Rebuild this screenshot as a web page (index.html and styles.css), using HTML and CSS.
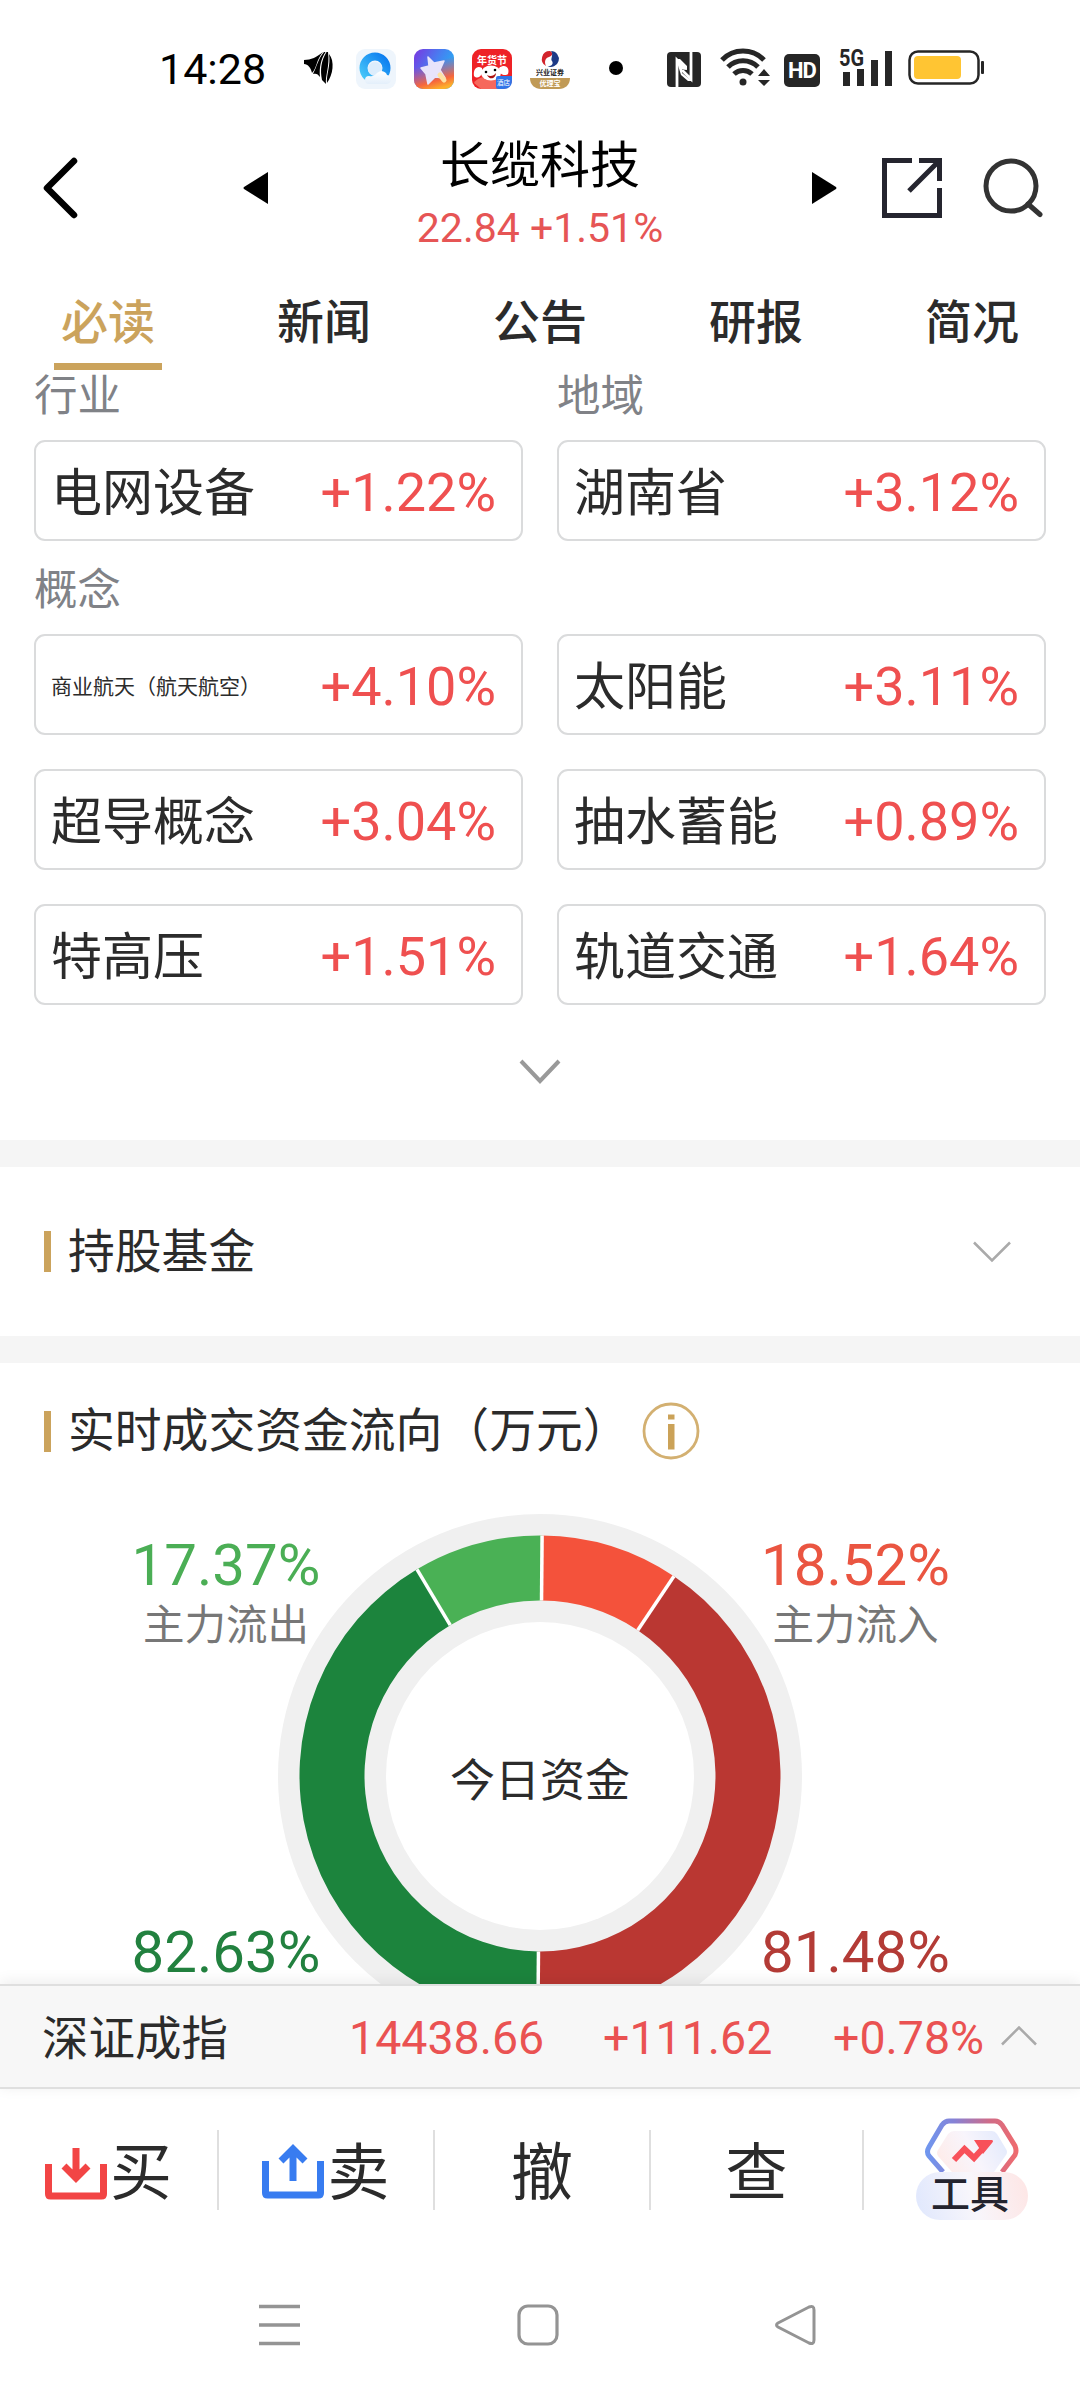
FILE: index.html
```html
<!DOCTYPE html>
<html lang="zh-CN">
<head>
    <meta charset="UTF-8">
    <meta name="viewport" content="width=device-width, initial-scale=1.0">
    <title>长缆科技</title>
    <link rel="stylesheet" href="styles.css">
</head>
<body>
    <div class="status-bar">
        <span class="time">14:28</span>
        <svg class="app-leaf" width="32" height="36" viewBox="0 0 32 36">
            <path d="M1 9C8 9 14 6 20 1C13 9 14 17 9 22C8 17 5 13 1 13Z"/>
            <path d="M21 1C15 8 14 15 10 23C13 22 15 23 17 26C16 17 18 8 22.500 1Z"/>
            <path d="M23.500 1C18 10 17 19 19 29L23 33C22 25 27 15 25 1Z"/>
            <path d="M26 3C28 14 23 24 24 32C30 24 32 10 26 3Z"/>
        </svg>
        <svg class="app" width="40" height="40" viewBox="0 0 40 40">
            <defs>
                <linearGradient id="qb" x1="0" y1="1" x2="1" y2="0"><stop offset="0" stop-color="#48c9f9"/><stop offset="1" stop-color="#0a7bf0"/></linearGradient>
                <linearGradient id="cloud" x1="0" y1="0" x2="0" y2="1"><stop offset="0" stop-color="#fff"/><stop offset="1" stop-color="#e3effb"/></linearGradient>
            </defs>
            <rect width="40" height="40" rx="9" fill="#eef5fc"/>
            <circle cx="19" cy="19" r="11.5" fill="none" stroke="url(#qb)" stroke-width="8"/>
            <circle cx="19" cy="20" r="7" fill="#dcedfc"/>
            <path d="M13 35a4 4 0 0 1 0-8c4 1 6-1 8-3a6 6 0 0 1 10 2a4.500 4.500 0 0 1-1 9z" fill="url(#cloud)"/>
        </svg>
        <svg class="app" width="40" height="40" viewBox="0 0 40 40">
            <defs>
                <linearGradient id="sky" x1="0" y1="0" x2="1" y2="0.6"><stop offset="0" stop-color="#7a35e0"/><stop offset="0.5" stop-color="#4a7bf0"/><stop offset="1" stop-color="#20b8f5"/></linearGradient>
                <linearGradient id="warm" x1="0.3" y1="0" x2="0.6" y2="1"><stop offset="0.35" stop-color="#f0406a" stop-opacity="0"/><stop offset="0.8" stop-color="#f7663c"/><stop offset="1" stop-color="#fcb02c"/></linearGradient>
            </defs>
            <rect width="40" height="40" rx="9" fill="url(#sky)"/>
            <rect width="40" height="40" rx="9" fill="url(#warm)"/>
            <path d="M14 8l6 6 10-2-4 9 5 8-10-1-7 7-2-10-5-6 8-2z" fill="#e8e4fb" stroke="#e8e4fb" stroke-width="1.500" stroke-linejoin="round"/>
            <path d="M26 26l4 5" stroke="#fde3a4" stroke-width="5" stroke-linecap="round"/>
        </svg>
        <svg class="app" width="40" height="40" viewBox="0 0 40 40">
            <rect width="40" height="40" rx="9" fill="#ee2226"/>
            <path d="M2 34c5-9 30-10 34 2l-5 4H9z" fill="#f6685c"/>
            <path d="M10 19C5 16 1 20 2 27c3 3 6 1 8-2zM27 19c7-5 11 1 9 6c-2 2-6 1-8-1z" fill="#fff"/>
            <ellipse cx="19" cy="24" rx="10" ry="7.500" fill="#fff"/>
            <circle cx="14" cy="23" r="1.300"/>
            <circle cx="23" cy="21" r="1.300"/>
            <path d="M15 26c3 2 7 1 9-2c0 5-6 8-9 2z" fill="#a11"/>
            <text x="20" y="14.500" text-anchor="middle" class="jd-title">年货节</text>
            <path d="M24 29q0-2 2-2h14v4q0 9-9 9h-5q-2 0-2-2z" fill="#2f74e8"/>
            <text x="31.500" y="36" text-anchor="middle" class="jd-tag">酒店</text>
        </svg>
        <svg class="app" width="40" height="40" viewBox="0 0 40 40">
            <path d="M20 2a8 8 0 0 0-4 15c-2-4-1-8 3-9c3-1 5-4 1-6z" fill="#d2242c"/>
            <path d="M21 2a8 8 0 1 1-4 15c4 1 7-2 5-5c-2-2 2-6-1-10z" fill="#1d3a86"/>
            <text x="20" y="26" text-anchor="middle" class="xy-name">兴业证券</text>
            <path d="M0 29h40c0 7-5 11-11 11H11C5 40 0 36 0 29z" fill="#c09a56"/>
            <text x="20" y="37" text-anchor="middle" class="xy-tag">优理宝</text>
        </svg>
        <i class="dot"></i>
        <svg class="nfc" width="34" height="35" viewBox="0 0 34 35">
            <rect width="34" height="35" rx="4" fill="#262626"/>
            <path d="M10 35V8L19 17M24 0V27L15 18" fill="none" stroke="#fff" stroke-width="2.800"/>
            <path d="M9 7L13 7L20 14V18L15 17V21L25 29H21L14 23" fill="#fff"/>
        </svg>
        <svg class="wifi" width="50" height="38" viewBox="0 0 50 38">
            <g fill="none" stroke="#262626" stroke-width="5">
                <path d="M2 12a29 29 0 0 1 42 0"/>
                <path d="M8 19a21 21 0 0 1 30 0"/>
                <path d="M14 26a13 13 0 0 1 18 0"/>
            </g>
            <circle cx="23" cy="34" r="3.500" fill="#262626"/>
            <path d="M38 28l6-7 6 7zM38 32h12l-6 6z" fill="#262626"/>
        </svg>
        <span class="hd">HD</span>
        <svg class="signal" width="54" height="48" viewBox="0 -10 54 48">
            <text x="0" y="17" textLength="25" lengthAdjust="spacingAndGlyphs">5G</text>
            <path d="M4 23h7v14H4zM18 20h7v17h-7zM32 11h7v26h-7zM46 2h7v35h-7z" fill="#262626"/>
        </svg>
        <svg class="battery" width="78" height="36" viewBox="0 0 78 36">
            <rect x="1.500" y="1.500" width="69" height="32" rx="8.500" fill="#fff" stroke="#262626" stroke-width="2.500"/>
            <rect x="6" y="6" width="47" height="23" rx="4" fill="#ffc533"/>
            <rect x="73" y="11" width="3" height="13" rx="1" fill="#262626"/>
        </svg>
    </div>

    <div class="header">
        <svg class="back" width="36" height="62" viewBox="0 0 36 62">
            <path d="M31 4L4 31l27 27" fill="none" stroke="#000" stroke-width="6.500" stroke-linecap="round" stroke-linejoin="round"/>
        </svg>
        <svg class="prev" width="26" height="34" viewBox="0 0 26 34"><path d="M25 1v32L1 18q-1-1 0-2z"/></svg>
        <div class="stock">
            <div class="stock-name">长缆科技</div>
            <div class="stock-price">22.84 +1.51%</div>
        </div>
        <svg class="next" width="26" height="34" viewBox="0 0 26 34"><path d="M1 1v32L25 18q1-1 0-2z"/></svg>
        <svg class="share" width="60" height="60" viewBox="0 0 60 60">
            <path d="M30 2.500H2.500v55h55V30M37 2.500h20.500V23M57 3L27 33" fill="none" stroke="#25252f" stroke-width="5"/>
        </svg>
        <svg class="search" width="60" height="60" viewBox="0 0 60 60">
            <circle cx="28" cy="28" r="25" fill="none" stroke="#333" stroke-width="5"/>
            <path d="M45 46l12 10.500" stroke="#333" stroke-width="5" stroke-linecap="round"/>
        </svg>
    </div>

    <div class="tabs">
        <div class="tab active">必读</div>
        <div class="tab">新闻</div>
        <div class="tab">公告</div>
        <div class="tab">研报</div>
        <div class="tab">简况</div>
    </div>

    <div class="content">
        <div class="plates">
            <div class="plate-grid">
                <div class="label">行业</div>
                <div class="label">地域</div>
                <div class="card"><span>电网设备</span><b>+1.22%</b></div>
                <div class="card"><span>湖南省</span><b>+3.12%</b></div>
            </div>
            <div class="label label-concept">概念</div>
            <div class="plate-grid concept">
                <div class="card"><span class="small">商业航天（航天航空）</span><b>+4.10%</b></div>
                <div class="card"><span>太阳能</span><b>+3.11%</b></div>
                <div class="card"><span>超导概念</span><b>+3.04%</b></div>
                <div class="card"><span>抽水蓄能</span><b>+0.89%</b></div>
                <div class="card"><span>特高压</span><b>+1.51%</b></div>
                <div class="card"><span>轨道交通</span><b>+1.64%</b></div>
            </div>
            <svg class="more" width="42" height="26" viewBox="0 0 42 26">
                <path d="M2 2l19 20L40 2" fill="none" stroke="#999" stroke-width="4"/>
            </svg>
        </div>

        <div class="section fund">
            <h2>持股基金</h2>
            <svg width="38" height="22" viewBox="0 0 38 22">
                <path d="M1 1.500l18 18 18-18" fill="none" stroke="#aaa" stroke-width="2.500"/>
            </svg>
        </div>

        <div class="section flow">
            <h2>实时成交资金流向（万元）
                <svg width="58" height="58" viewBox="0 0 58 58">
                    <circle cx="29" cy="29" r="27" fill="none" stroke="#d3b071" stroke-width="2.800"/>
                    <path d="M26 12.500h6.500v5H26zM26 22h6.500v25.500H26z" fill="#cba258"/>
                </svg>
            </h2>
            <div class="chart">
                <svg class="donut" width="524" height="524" viewBox="-262 -262 524 524">
                    <circle r="262" fill="#f0f0f0"/>
                    <circle r="154" fill="#fff"/>
                    <g id="ring" transform="rotate(-89.500)"></g>
                    <text y="21" text-anchor="middle">今日资金</text>
                </svg>
                <div class="amount out-main"><b>17.37%</b><span>主力流出</span></div>
                <div class="amount in-main"><b>18.52%</b><span>主力流入</span></div>
                <div class="amount out-retail"><b>82.63%</b></div>
                <div class="amount in-retail"><b>81.48%</b></div>
            </div>
        </div>
    </div>

    <div class="index-bar">
        <span class="index-name">深证成指</span>
        <span class="index-value">14438.66</span>
        <span class="index-change">+111.62</span>
        <span class="index-rate">+0.78%</span>
        <svg width="36" height="20" viewBox="0 0 36 20">
            <path d="M1 18.500l17-17 17 17" fill="none" stroke="#aaa" stroke-width="2.500"/>
        </svg>
    </div>

    <div class="actions">
        <div class="action">
            <svg width="62" height="62" viewBox="0 0 62 62">
                <path d="M3.500 22v30q0 2 2 2h51q2 0 2-2V22" fill="none" stroke="#f24545" stroke-width="7"/>
                <path d="M31 6v28M19 24l12 12 12-12" fill="none" stroke="#f24545" stroke-width="7"/>
            </svg>
            <span>买</span>
        </div>
        <div class="action">
            <svg width="62" height="62" viewBox="0 0 62 62">
                <path d="M3.500 19v32q0 2 2 2h51q2 0 2-2V19" fill="none" stroke="#387cf0" stroke-width="7"/>
                <path d="M31 39V8M19 19L31 7l12 12" fill="none" stroke="#387cf0" stroke-width="7"/>
            </svg>
            <span>卖</span>
        </div>
        <div class="action"><span>撤</span></div>
        <div class="action"><span>查</span></div>
        <div class="tool">
            <svg width="96" height="54" viewBox="0 0 96 54">
                <defs>
                    <linearGradient id="hex" x1="0" y1="0" x2="1" y2="0"><stop offset="0" stop-color="#7096ee"/><stop offset="0.3" stop-color="#8682d6"/><stop offset="0.7" stop-color="#cf6c88"/><stop offset="1" stop-color="#ee6b6f"/></linearGradient>
                    <linearGradient id="hexin" x1="0" y1="0.6" x2="1" y2="0.3"><stop offset="0" stop-color="#feecea"/><stop offset="0.5" stop-color="#f8f5fc"/><stop offset="1" stop-color="#e3eafc"/></linearGradient>
                </defs>
                <path d="M30 13h38q3 0 5 3l9 15q2 3 0 6L70 54H28L14 38q-2-3 0-6l10-16q3-3 6-3z" fill="url(#hexin)"/>
                <path d="M19 54L5 38q-3-4 0-9L18 7q3-4 7-4h46q4 0 7 4l13 21q2 5 0 9L78 54" fill="none" stroke="url(#hex)" stroke-width="5"/>
                <path d="M30 42l10.500-11 9.500 9L61 28" fill="none" stroke="#f8515a" stroke-width="6"/>
                <path d="M50 22h18q2 1 0 3L59 36z" fill="#f8515a"/>
            </svg>
            <span>工具</span>
        </div>
    </div>

    <div class="nav-bar">
        <svg width="42" height="42" viewBox="0 0 42 42"><path d="M0 2.500h41M0 21h41M0 39.500h41" stroke="#949494" stroke-width="3.500"/></svg>
        <svg width="42" height="42" viewBox="0 0 42 42"><rect x="2" y="2" width="38" height="38" rx="9" fill="none" stroke="#949494" stroke-width="3.200"/></svg>
        <svg width="42" height="42" viewBox="0 0 42 42"><path d="M3 19L34 3q5-2 5 3v30q0 5-5 3L3 23q-3-2 0-4z" fill="none" stroke="#949494" stroke-width="3"/></svg>
    </div>

    <script>
        // clockwise from the top, each side of the ring adds up to 100%
        const parts = [
            { value: 18.52, color: '#f4523b' },
            { value: 81.48, color: '#ba3732' },
            { value: 82.63, color: '#1c843d' },
            { value: 17.37, color: '#4ab155' }
        ];
        const outer = 240.5;
        const inner = 175.5;

        function point(r, percent) {
            const a = percent / 200 * Math.PI * 2;
            return (r * Math.cos(a)).toFixed(2) + ' ' + (r * Math.sin(a)).toFixed(2);
        }

        let start = 0;
        let html = '';
        parts.forEach(part => {
            const end = start + part.value;
            html += `<path d="M${point(outer, start)}A${outer} ${outer} 0 0 1 ${point(outer, end)}L${point(inner, end)}A${inner} ${inner} 0 0 0 ${point(inner, start)}Z" fill="${part.color}"/>`;
            start = end;
        });
        start = 0;
        parts.forEach(part => {
            html += `<path d="M${point(inner, start)}L${point(outer, start)}" stroke="#fff" stroke-width="3.500"/>`;
            start += part.value;
        });
        document.getElementById('ring').innerHTML = html;
    </script>
</body>
</html>
```
FILE: styles.css
```css
* {
    box-sizing: border-box;
}
body {
    margin: 0;
    width: 1080px;
    height: 2400px;
    display: flex;
    flex-direction: column;
    overflow: hidden;
    background: #fff;
    color: #2b2b2b;
    font-family: Roboto, "Noto Sans CJK SC", sans-serif;
}
svg {
    display: block;
    flex: none;
}
b, h2 {
    font-weight: 400;
    margin: 0;
}

/* status bar */
.status-bar {
    display: flex;
    align-items: flex-start;
    height: 110px;
    padding: 28px 0 0 159px;
    flex: none;
}
.time {
    width: 144px;
    margin-top: 16px;
    font-size: 43px;
    line-height: 50px;
    color: #000;
}
.app-leaf {
    margin: 23px 21px 0 0;
}
.app {
    margin: 21px 18px 0 0;
}
.jd-title {
    font-size: 10px;
    font-weight: 700;
    fill: #fff;
}
.jd-tag {
    font-size: 6.5px;
    fill: #fff;
}
.xy-name {
    font-size: 7px;
    font-weight: 700;
    fill: #222;
}
.xy-tag {
    font-size: 7px;
    font-weight: 700;
    fill: #fff;
}
.dot {
    width: 14px;
    height: 14px;
    margin: 33px 44px 0 21px;
    border-radius: 50%;
    background: #000;
}
.nfc {
    margin: 24px 19px 0 0;
}
.wifi {
    margin: 20px 14px 0 0;
}
.hd {
    width: 36px;
    height: 33px;
    margin: 26px 19px 0 0;
    border-radius: 5px;
    background: #262626;
    color: #fff;
    font-size: 22px;
    font-weight: 700;
    line-height: 33px;
    text-align: center;
    letter-spacing: -1px;
}
.signal {
    margin: 11px 15px 0 0;
}
.signal text {
    font-size: 23px;
    font-weight: 700;
    fill: #262626;
}
.battery {
    margin-top: 22px;
}

/* header */
.header {
    display: flex;
    height: 160px;
    flex: none;
    padding-left: 43px;
}
.back {
    margin-top: 47px;
}
.prev {
    margin: 61px 0 0 164px;
}
.stock {
    width: 542px;
    text-align: center;
}
.stock-name {
    margin-top: 26px;
    font-size: 50px;
    line-height: 60px;
    color: #000;
}
.stock-price {
    margin-top: 7px;
    font-size: 41px;
    line-height: 50px;
    color: #e65555;
}
.next {
    margin-top: 61px;
}
.share {
    margin: 48px 0 0 45px;
}
.search {
    margin: 48px 0 0 41px;
}

/* tabs */
.tabs {
    display: flex;
    height: 100px;
    flex: none;
}
.tab {
    flex: 1;
    height: 100px;
    font-size: 47px;
    font-weight: 500;
    line-height: 106px;
    text-align: center;
}
.tab.active {
    margin: 0 54px;
    flex: 0 0 108px;
    color: #cba35c;
    border-bottom: 7px solid #cba35c;
}

/* scroll area */
.content {
    flex: 1;
    min-height: 0;
    overflow: hidden;
}
.plates {
    height: 770px;
    padding: 0 34px;
}
.plate-grid {
    display: grid;
    grid-template-columns: 489px 489px;
    column-gap: 34px;
}
.concept {
    row-gap: 34px;
}
.label {
    height: 70px;
    font-size: 43.5px;
    line-height: 54px;
    color: #808287;
}
.label-concept {
    height: 93px;
    padding-top: 23px;
}
.card {
    display: flex;
    justify-content: space-between;
    align-items: center;
    height: 101px;
    padding: 4px 25px 0 15px;
    border: 2px solid #dadbdc;
    border-radius: 11px;
}
.card span {
    padding-top: 3px;
    font-size: 51px;
    line-height: 60px;
}
.card .small {
    padding: 0;
    font-size: 21px;
}
.card b {
    font-size: 54px;
    line-height: 60px;
    color: #ef5050;
}
.more {
    margin: 54px auto 0;
}
.section {
    border-top: 27px solid #f5f5f5;
    padding: 0 44px;
}
.section h2 {
    display: flex;
    align-items: center;
    height: 60px;
    font-size: 46.8px;
    line-height: 62px;
}
.section h2::before {
    content: "";
    width: 7px;
    height: 41px;
    margin-right: 17px;
    background: #cba35c;
}
.fund {
    display: flex;
    justify-content: space-between;
    align-items: center;
    height: 196px;
    padding-right: 69px;
}
.flow {
    padding: 38px 0 0;
}
.flow h2 {
    padding-left: 44px;
}
.flow h2 svg {
    margin-left: 12px;
}

/* donut chart */
.chart {
    display: grid;
    grid-template-columns: 452px 1fr 449px;
    grid-template-rows: 387px 137px;
    margin-top: 53px;
}
.donut {
    grid-area: 1 / 1 / 3 / 4;
    justify-self: center;
}
.donut text {
    font-size: 45px;
    fill: #2b2b2b;
}
.amount {
    text-align: center;
    color: #777;
}
.amount b {
    display: block;
    margin-top: 21px;
    font-size: 58.2px;
    line-height: 60px;
}
.amount span {
    display: block;
    font-size: 41.5px;
    line-height: 61px;
}
.out-main {
    grid-area: 1 / 1;
}
.in-main {
    grid-area: 1 / 3;
}
.out-retail {
    grid-area: 2 / 1;
}
.in-retail {
    grid-area: 2 / 3;
}
.out-main b {
    color: #4bae55;
}
.in-main b {
    color: #ea5541;
}
.out-retail b {
    color: #22813f;
}
.in-retail b {
    color: #b33b36;
}

/* index ticker */
.index-bar {
    position: relative;
    display: flex;
    align-items: center;
    height: 105px;
    flex: none;
    padding: 2px 0 0 42px;
    border-top: 2px solid #dfdfdf;
    border-bottom: 2px solid #dfdfdf;
    background: #f7f7f7;
    box-shadow: 0 -2px 14px rgba(0, 0, 0, 0.08);
    font-size: 46.5px;
    line-height: 60px;
    color: #ea5252;
}
.index-name {
    width: 307px;
    padding-top: 3px;
    font-size: 46.5px;
    color: #2b2b2b;
}
.index-value {
    width: 254px;
}
.index-change {
    width: 230px;
}
.index-rate {
    width: 168px;
}
.index-bar svg {
    margin-top: -3px;
}

/* trade buttons */
.actions {
    display: flex;
    height: 170px;
    flex: none;
    padding-top: 41px;
    background: #fff;
}
.action {
    display: flex;
    justify-content: center;
    align-items: center;
    width: 216px;
    height: 80px;
    border-right: 2px solid #dfdfdf;
    font-size: 62px;
    line-height: 80px;
}
.action:nth-child(1) {
    width: 219px;
}
.action:nth-child(4) {
    width: 213px;
}
.action svg {
    margin: 6px 3px 0 0;
}
.action span {
    padding-top: 8px;
}
.tool {
    display: flex;
    flex-direction: column;
    align-items: center;
    width: 112px;
    margin: -12px 0 0 52px;
}
.tool span {
    width: 112px;
    height: 48px;
    padding-right: 4px;
    border-radius: 24px;
    background: linear-gradient(75deg, #dfe7fd, #f8f6fb 50%, #fee5e4);
    color: #23232e;
    font-size: 39px;
    font-weight: 500;
    line-height: 47px;
    text-align: center;
}

/* system navigation */
.nav-bar {
    display: flex;
    justify-content: space-between;
    height: 141px;
    flex: none;
    padding: 45px 263px 0 259px;
}
```
